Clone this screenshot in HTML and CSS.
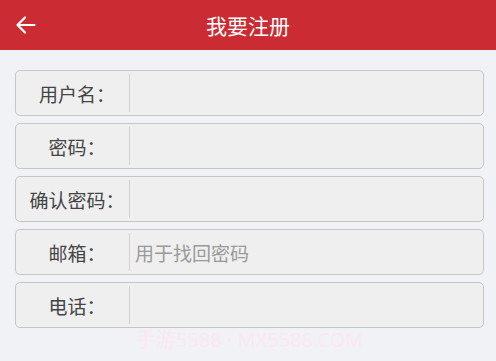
FILE: index.html
```html
<!DOCTYPE html>
<html lang="zh-CN">
<head>
    <meta charset="UTF-8">
    <title>我要注册</title>
    <link rel="stylesheet" href="styles.css">
</head>
<body>
    <div class="header">
        <a class="back" href="#">
            <svg width="20" height="18" viewBox="0 0 20 18"><path d="M1.5 9H18.5M9 1.5L1.5 9L9 16.5" fill="none" stroke="#fff" stroke-width="2.2" stroke-linecap="round" stroke-linejoin="round"/></svg>
        </a>
        <h1>我要注册</h1>
    </div>

    <div class="form">
        <div class="row">
            <label>用户名：</label>
            <input type="text">
        </div>
        <div class="row">
            <label>密码：</label>
            <input type="password">
        </div>
        <div class="row">
            <label>确认密码：</label>
            <input type="password">
        </div>
        <div class="row">
            <label>邮箱：</label>
            <input type="text" placeholder="用于找回密码">
        </div>
        <div class="row">
            <label>电话：</label>
            <input type="text">
        </div>
        <div class="mark">手游5588 · MX5588.COM</div>
    </div>
</body>
</html>
```

FILE: styles.css
```css
html, body {
    margin: 0;
    padding: 0;
    background-color: #f1f2f6;
    font-family: "Noto Sans CJK SC", "Noto Sans", sans-serif;
}

.header {
    height: 50px;
    background-color: #cb2b32;
    display: flex;
    align-items: center;
    justify-content: center;
    position: relative;
}

.header h1 {
    margin: 0;
    color: #ffffff;
    font-size: 21px;
    font-weight: normal;
}

.back {
    position: absolute;
    left: 16px;
    top: 16px;
    display: flex;
}

.form {
    padding: 20px 12px 0 15px;
    display: flex;
    flex-direction: column;
    gap: 7px;
}

.row {
    height: 44px;
    border: 1px solid #c6c6c8;
    border-radius: 5px;
    background-color: #efefef;
    display: flex;
    align-items: center;
}

.row label {
    width: 113px;
    text-align: center;
    font-size: 19px;
    color: #444444;
    padding-left: 9px;
    box-sizing: border-box;
    white-space: nowrap;
}

.row input {
    flex: 1;
    height: 38px;
    border: none;
    border-left: 1px solid #d2d2d2;
    background: transparent;
    padding: 0 0 0 5px;
    font-family: inherit;
    font-size: 19px;
    color: #444444;
    outline: none;
}

.row input::placeholder {
    color: #9a9a9a;
}

.mark {
    margin-top: -9px;
    margin-left: 121px;
    font-size: 20px;
    line-height: 27px;
    color: #fbe8f3;
    font-family: "Noto Sans", sans-serif;
}
```
